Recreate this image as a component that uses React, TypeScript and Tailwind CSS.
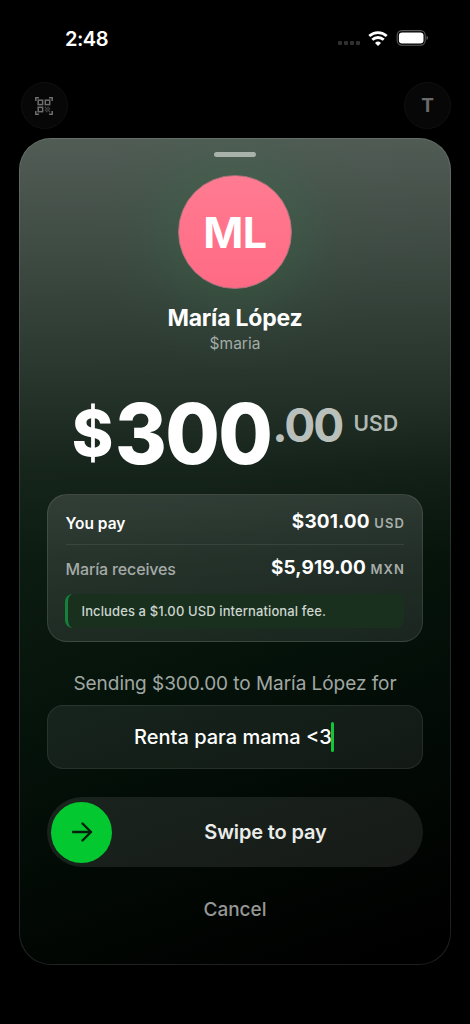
import React from "react";

const StatusBar: React.FC = () => {
  return (
    <div className="flex h-[76px] items-center justify-between pl-[65px] pr-[41px]">
      <span className="pt-px text-[20px] font-semibold leading-6 tracking-[-0.5px] text-white">2:48</span>
      <div className="flex items-center">
        <div className="mr-[8px] mt-[10px] flex gap-[2px]">
          <span className="size-1 rounded-[1px] bg-[#303030]" />
          <span className="size-1 rounded-[1px] bg-[#303030]" />
          <span className="size-1 rounded-[1px] bg-[#303030]" />
          <span className="size-1 rounded-[1px] bg-[#303030]" />
        </div>
        <svg width="20" height="15" viewBox="0 0 20 15" fill="none" stroke="#fff" strokeWidth="2.8">
          <path d="M1.3 5.1a12.6 12.6 0 0 1 17.4 0" />
          <path d="M4.3 8.8a8.2 8.2 0 0 1 11.4 0" />
          <path d="M10 15l-3-3.1a4.5 4.5 0 0 1 6 0z" fill="#fff" stroke="none" />
        </svg>
        <svg className="ml-[8px]" width="33" height="16" viewBox="0 0 33 16">
          <rect x="1.2" y="0.6" width="28" height="14.6" rx="4.6" fill="none" stroke="#5a5a5a" strokeWidth="1.1" />
          <rect x="2.9" y="2.4" width="24.6" height="11" rx="3.2" fill="#fff" />
          <path d="M30.6 5.8c1.6.6 1.6 3.6 0 4.2z" fill="#777" />
        </svg>
      </div>
    </div>
  );
};

const QrIcon: React.FC = () => {
  return (
    <svg className="mr-px" width="18" height="18" viewBox="0 0 18 18" fill="none" stroke="#6e6e6e" strokeWidth="1.5">
      <path d="M.8 4V.8H4M14 .8h3.2V4M.8 14v3.2H4M14 17.2h3.2V14" />
      <rect x="3.2" y="3.2" width="4.4" height="4.4" />
      <rect x="10.3" y="3.2" width="4.4" height="4.4" />
      <rect x="3.2" y="10.3" width="4.4" height="4.4" />
      <path
        d="M9.7 10.4h1.4M12.4 10.4h1.4M11 11.8h1.4M13.7 11.8h1.4M9.7 13.2h1.4M12.4 13.2h1.4M11 14.6h1.4M13.7 14.6h1.4"
        stroke="#4c4c4c"
      />
    </svg>
  );
};

const App: React.FC = () => {
  return (
    <main className="h-[1024px] w-[470px] overflow-hidden bg-black font-['Inter',sans-serif] text-white">
      <StatusBar />

      {/* Header buttons, dimmed behind the sheet */}
      <div className="flex h-[62px] items-start justify-between pl-[21px] pr-[19px] pt-[6px]">
        <button className="flex size-[47px] items-center justify-center rounded-full border border-[#101010] bg-[#070707]">
          <QrIcon />
        </button>
        <button className="flex size-[47px] items-center justify-center rounded-full border border-[#101010] bg-[#070707] pt-[2px] text-[19px] font-bold text-[#6b6b6b]">
          T
        </button>
      </div>

      {/* Payment sheet */}
      <section className="mx-[19px] flex h-[827px] flex-col items-center rounded-[32px] border border-white/12 bg-[radial-gradient(circle_at_50%_94px,rgba(56,110,74,0.36)_0px,rgba(56,110,74,0.26)_60px,rgba(56,110,74,0.08)_95px,rgba(56,110,74,0)_140px),linear-gradient(180deg,rgba(255,255,255,0.27)_0px,rgba(255,255,255,0.2)_110px,rgba(255,255,255,0.12)_220px,rgba(255,255,255,0.035)_330px,rgba(255,255,255,0)_420px),linear-gradient(160deg,#102016_0%,#0d1c13_42%,#05130b_60%,#020904_78%,#000_96%)] bg-origin-border px-[27px] pt-[13px]">
        <div className="h-[5px] w-[42px] rounded-full bg-[#a8b2aa]" />

        <div className="mt-[18px] flex size-[114px] items-center justify-center rounded-full border border-[#a8727b] bg-linear-to-b from-[#ff7b91] to-[#ff6a84] text-[43px] font-bold tracking-[-0.5px]">
          ML
        </div>
        <h1 className="mt-[14px] text-[23px] font-bold leading-[30px] tracking-[-0.2px]">María López</h1>
        <p className="text-[15.5px] leading-[22px] text-[#a3aba5]">$maria</p>

        {/* Amount, dollars set slightly condensed */}
        <div className="mt-[36px] flex h-[84px] items-start whitespace-nowrap">
          <span className="mt-[6px] text-[63px] font-extrabold leading-[72px]">$</span>
          <span className="ml-[2px] w-[156px] origin-left scale-x-[0.94] text-[84px] font-extrabold leading-[85px] tracking-[-1.7px]">300</span>
          <span className="ml-px mt-[10px] text-[46px] font-[750] leading-[48px] tracking-[-2px] text-[#b9bfba]">.00</span>
          <span className="ml-[11px] mt-[20px] text-[21px] font-semibold leading-[26px] tracking-[0.2px] text-[#b1b7b2]">USD</span>
        </div>

        {/* Breakdown */}
        <div className="mt-[19px] h-[148px] w-full rounded-[20px] border border-white/10 bg-linear-to-b from-white/13 to-white/9 pl-[17.5px] pr-[18px]">
          <div className="flex h-[50px] items-center justify-between border-b border-white/8 pt-[6px]">
            <span className="pt-[2px] text-[15.5px] font-semibold">You pay</span>
            <span className="-mr-px text-[19px] font-bold tracking-[0.1px]">
              $301.00 <span className="text-[13px] font-semibold tracking-[1.1px] text-[#a8aeaa]">USD</span>
            </span>
          </div>
          <div className="flex h-[49px] items-center justify-between pb-[2px]">
            <span className="text-[16px] font-medium tracking-[-0.15px] text-[#a5aaa7]">María receives</span>
            <span className="-mr-px text-[19px] font-bold tracking-[0.1px]">
              $5,919.00 <span className="text-[13px] font-semibold tracking-[1.1px] text-[#a8aeaa]">MXN</span>
            </span>
          </div>
          <div className="-ml-px flex h-[34px] items-center rounded-[8px] border-l-[3px] border-[#15823a] bg-[#19301f] pl-[14px] pt-[2px] text-[13px] font-medium tracking-[0.11px] text-[#cdd6cf]">
            Includes a $1.00 USD international fee.
          </div>
        </div>

        <p className="mt-[29px] text-[19px] leading-[26px] tracking-[-0.05px] text-[#a0a7a2]">Sending $300.00 to María López for</p>

        {/* Note */}
        <div className="mt-[8px] flex h-[64px] w-full items-center justify-center rounded-[16px] border border-white/8 bg-white/7 pr-[2px] text-[20px] font-medium">
          <span>Renta para mama &lt;3</span>
          <span className="-ml-px h-[30px] w-[3px] rounded-full bg-[#13c53a]" />
        </div>

        <button className="mt-[28px] flex h-[70px] w-full items-center rounded-full bg-white/9 pl-[4px]">
          <span className="flex size-[61px] items-center justify-center rounded-full bg-[#04c82f]">
            <svg width="22" height="22" viewBox="0 0 22 22" fill="none" stroke="#06210c" strokeWidth="2.4" strokeLinecap="round" strokeLinejoin="round">
              <path d="M2 11h18M11.5 2.5L20 11l-8.5 8.5" />
            </svg>
          </span>
          <span className="flex-1 pr-[4px] text-[20px] font-semibold tracking-[-0.15px] text-[#eaecea]">Swipe to pay</span>
        </button>

        <button className="mt-[29px] text-[19px] font-medium leading-[28px] text-[#959795]">Cancel</button>
      </section>
    </main>
  );
};

export default App;
